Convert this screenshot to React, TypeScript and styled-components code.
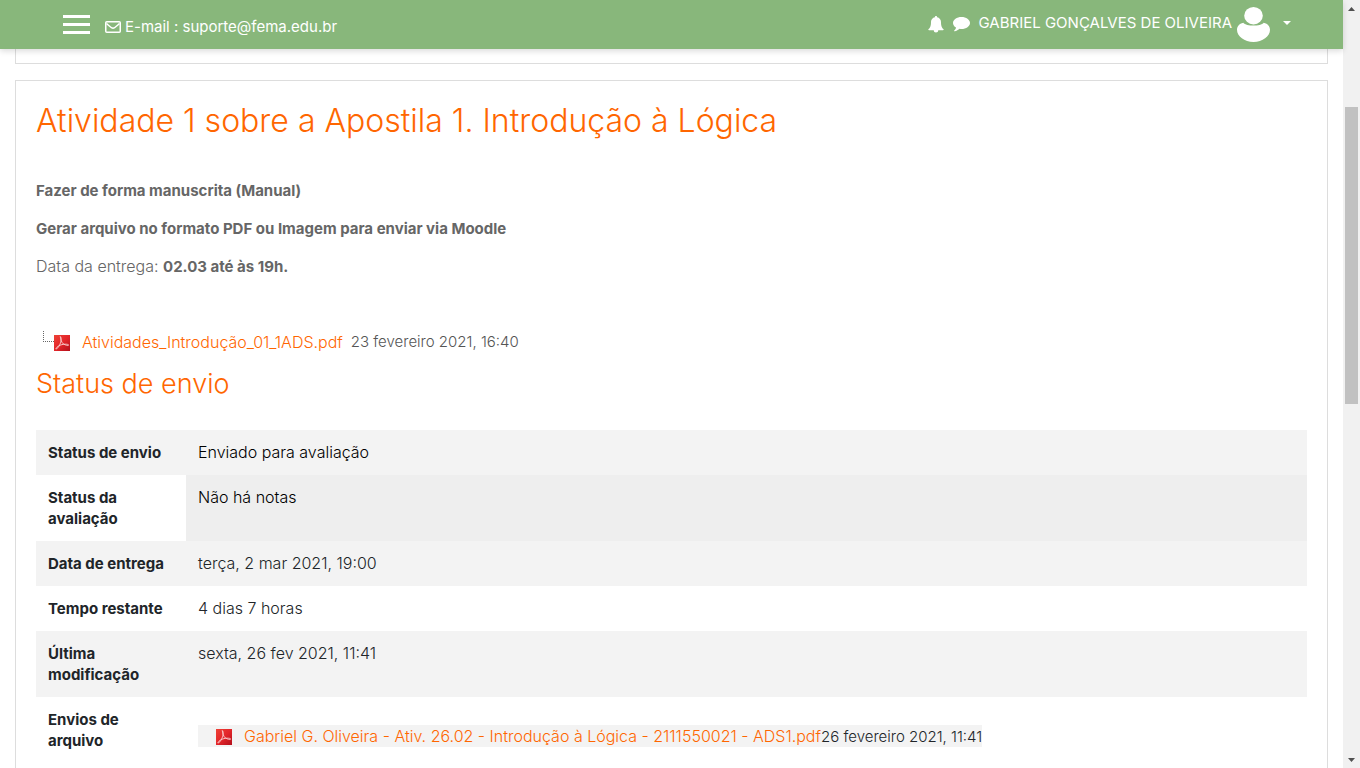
import React, { useId } from "react";
import styled, { createGlobalStyle } from "styled-components";

const GlobalStyle = createGlobalStyle`
  *, *::before, *::after { box-sizing: border-box; }
  body {
    margin: 0;
    background: #fff;
    color: #212529;
    font-family: "Century Gothic", Inter, "Open Sans", sans-serif;
    font-size: 16px;
    font-weight: 300;
    line-height: 22px;
  }
  h2, h3, p { margin: 0; }
`;

const Shell = styled.div`
  display: grid;
  grid-template-columns: minmax(0, 1fr) 17px;
  height: 100vh;
  overflow: hidden;
`;

const Page = styled.div`
  display: flex;
  flex-direction: column;
  min-height: 0;
`;

const TopBar = styled.header`
  z-index: 1;
  display: flex;
  flex: none;
  align-items: center;
  justify-content: space-between;
  height: 49px;
  padding: 0 52px 0 63px;
  background: #88b77b;
  box-shadow: 0 2px 6px rgba(0, 0, 0, 0.15);
  color: #fff;
  font-size: 15px;
  font-weight: 400;
`;

const BarGroup = styled.div<{ $gap: number }>`
  display: flex;
  align-items: center;
  gap: ${(p) => p.$gap}px;
`;

const BarButton = styled.button`
  display: flex;
  align-items: center;
  padding: 0;
  border: 0;
  background: none;
  color: inherit;
  font: inherit;
  cursor: pointer;
`;

const MailLink = styled.a`
  display: flex;
  align-items: center;
  gap: 4px;
  padding-top: 4px;
  color: inherit;
  text-decoration: none;
`;

const UserButton = styled(BarButton)`
  gap: 5px;
`;

const UserName = styled.span`
  padding-bottom: 3px;
`;

const Caret = styled.span`
  margin: 0 0 4px 8px;
  border: 4px solid transparent;
  border-top-color: #fff;
  border-bottom: 0;
`;

const Content = styled.main`
  display: flex;
  flex: 1;
  flex-direction: column;
  gap: 16px;
  min-height: 0;
  padding: 0 15px;
  overflow: hidden;
`;

const Card = styled.section`
  flex: none;
  padding: 20px;
  border: 1px solid #ddd;
`;

const PreviousCard = styled(Card)`
  padding: 14px 0 0;
  border-top: 0;
`;

const Title = styled.h2`
  margin-bottom: 38px;
  color: #ff6600;
  font-size: 32px;
  font-weight: 300;
  line-height: 40px;
`;

const Subtitle = styled.h3`
  margin: 15px 0 30px;
  color: #ff6600;
  font-size: 27px;
  font-weight: 300;
  line-height: 32px;
`;

const Intro = styled.div`
  display: grid;
  gap: 16px;
  margin-bottom: 54px;
  color: #666;
`;

const Strong = styled.strong`
  font-size: 15px;
  font-weight: 700;
  line-height: 20px;
`;

const FileRow = styled.div`
  display: flex;
  align-items: center;
  padding-left: 7px;
  color: #555;
`;

const Branch = styled.span`
  align-self: flex-start;
  width: 11px;
  height: 11px;
  border-bottom: 1px dotted #666;
  border-left: 1px dotted #666;
`;

const FileLink = styled.a`
  color: #ff6600;
  text-decoration: none;
`;

const FileDate = styled.span<{ $gap?: number }>`
  margin-left: ${(p) => p.$gap ?? 0}px;
  font-size: 15px;
`;

const StatusTable = styled.table`
  width: 100%;
  border-collapse: collapse;
  table-layout: fixed;
  line-height: 21px;

  tr:nth-child(odd) { background: #f3f3f3; }
`;

const Label = styled.th`
  width: 150px;
  padding: 12px;
  font-size: 15px;
  font-weight: 700;
  text-align: left;
  vertical-align: top;
`;

const Value = styled.td<{ $shaded?: boolean; $dark?: boolean }>`
  padding: 12px;
  background: ${(p) => (p.$shaded ? "#eee" : "transparent")};
  color: ${(p) => (p.$dark ? "#000" : "inherit")};
  vertical-align: top;
`;

const Submission = styled.div`
  display: inline-flex;
  align-items: center;
  height: 22px;
  margin-top: 16px;
  padding-left: 18px;
  background: #f3f3f3;
`;

const PdfSvg = styled.svg`
  flex: none;
  margin: 2px 12px 0 0;
`;

const ScrollBar = styled.aside`
  display: flex;
  flex-direction: column;
  align-items: center;
  background: #f1f1f1;
`;

const ScrollButton = styled(BarButton)`
  justify-content: center;
  width: 17px;
  height: 17px;
`;

const Track = styled.div`
  display: grid;
  flex: 1;
  grid-template-rows: 90fr 297fr 347fr;
  width: 13px;
`;

const Thumb = styled.div`
  grid-row: 2;
  background: #c1c1c1;
`;

function PdfIcon() {
  const gradient = useId();
  return (
    <PdfSvg width="16" height="16" viewBox="0 0 16 16" aria-hidden="true">
      <defs>
        <linearGradient id={gradient} x1="0" y1="0" x2="1" y2="1">
          <stop offset="0" stopColor="#ee4136" />
          <stop offset="0.5" stopColor="#e3262a" />
          <stop offset="1" stopColor="#b30f1b" />
        </linearGradient>
      </defs>
      <rect width="16" height="16" fill={`url(#${gradient})`} />
      <path
        d="M6.300 1.500C6.600 4.500 7.500 7.500 9.500 9c1.700 1 4.600 2 5.100 1.200.3-1-3.200-1.400-6.600-.6-2.500.6-5.200 2-6.200 4.300 1.800.2 3.700-3.300 4.700-6 .8-2.300 1-5.500-.2-6.400z"
        fill="none"
        stroke="#f8cfcf"
        strokeWidth="0.9"
      />
    </PdfSvg>
  );
}

const rows: { label: string; value: string; shaded?: boolean; dark?: boolean }[] = [
  { label: "Status de envio", value: "Enviado para avaliação", dark: true },
  { label: "Status da avaliação", value: "Não há notas", shaded: true, dark: true },
  { label: "Data de entrega", value: "terça, 2 mar 2021, 19:00" },
  { label: "Tempo restante", value: "4 dias 7 horas" },
  { label: "Última modificação", value: "sexta, 26 fev 2021, 11:41" },
];

export default function App() {
  return (
    <Shell>
      <GlobalStyle />
      <Page>
        <TopBar>
          <BarGroup $gap={15}>
            <BarButton type="button" aria-label="Menu">
              <svg width="27" height="19" viewBox="0 0 27 19" fill="#fff">
                <path d="M0 0h27v3H0zM0 8h27v3H0zM0 16h27v3H0z" />
              </svg>
            </BarButton>
            <MailLink href="mailto:suporte@fema.edu.br">
              <svg width="16" height="12" viewBox="0 0 16 12" fill="none" stroke="#fff" strokeWidth="1.500">
                <rect x=".75" y=".75" width="14.500" height="10.500" rx="1" />
                <path d="M1.500 2.500C3 4 5 5.500 6.500 6.700q1.500 1.200 3 0C11 5.500 13 4 14.500 2.500" />
              </svg>
              E-mail : suporte@fema.edu.br
            </MailLink>
          </BarGroup>
          <BarGroup $gap={9}>
            <BarButton type="button" aria-label="Notificações">
              <svg width="16" height="17" viewBox="0 0 16 17" fill="#fff">
                <path d="M8 0c.7 0 1.100.5 1.100 1.200C11.500 1.700 13 3.500 13 6c0 4.300 1 6 2.600 7.300.3.400 0 .9-.6.9h-4.700a2.300 2.300 0 0 1-4.600 0H1c-.6 0-.9-.5-.6-.9C2 12 3 10.300 3 6c0-2.500 1.500-4.300 3.900-4.800C6.900.5 7.300 0 8 0z" />
              </svg>
            </BarButton>
            <BarButton type="button" aria-label="Mensagens">
              <svg width="17" height="15" viewBox="0 0 17 15" fill="#fff">
                <path d="M8.500 0C13.200 0 17 2.700 17 6s-3.800 6-8.500 6c-.7 0-1.300 0-1.900-.2-1.300 1.200-3 2.200-5 2.500-.5 0-.7-.4-.3-.8.9-.8 1.500-1.600 1.700-2.900C1.200 9.500 0 7.900 0 6c0-3.300 3.800-6 8.500-6z" />
              </svg>
            </BarButton>
            <UserButton type="button">
              <UserName>GABRIEL GONÇALVES DE OLIVEIRA</UserName>
              <svg width="33" height="35" viewBox="0 0 33 35" fill="#fff">
                <ellipse cx="16.500" cy="8.700" rx="9.300" ry="8.700" />
                <path d="M6.300 15.700c3 3.800 17.400 3.800 20.400 0C31 16.600 33 19.500 33 22.800 33 29.500 25.500 35 16.500 35S0 29.500 0 22.800c0-3.300 2-6.200 6.300-7.100z" />
              </svg>
              <Caret />
            </UserButton>
          </BarGroup>
        </TopBar>
        <Content>
          <PreviousCard aria-hidden="true" />
          <Card>
            <Title>Atividade 1 sobre a Apostila 1. Introdução à Lógica</Title>
            <Intro>
              <p><Strong>Fazer de forma manuscrita (Manual)</Strong></p>
              <p><Strong>Gerar arquivo no formato PDF ou Imagem para enviar via Moodle</Strong></p>
              <p>Data da entrega: <Strong>02.03 até às 19h.</Strong></p>
            </Intro>
            <FileRow>
              <Branch />
              <PdfIcon />
              <FileLink href="#atividades">Atividades_Introdução_01_1ADS.pdf</FileLink>
              <FileDate $gap={8}>23 fevereiro 2021, 16:40</FileDate>
            </FileRow>
            <Subtitle>Status de envio</Subtitle>
            <StatusTable>
              <tbody>
                {rows.map((row) => (
                  <tr key={row.label}>
                    <Label scope="row">{row.label}</Label>
                    <Value $shaded={row.shaded} $dark={row.dark}>{row.value}</Value>
                  </tr>
                ))}
                <tr>
                  <Label scope="row">Envios de arquivo</Label>
                  <Value>
                    <Submission>
                      <PdfIcon />
                      <FileLink href="#envio">
                        Gabriel G. Oliveira - Ativ. 26.02 - Introdução à Lógica - 2111550021 - ADS1.pdf
                      </FileLink>
                      <FileDate>26 fevereiro 2021, 11:41</FileDate>
                    </Submission>
                  </Value>
                </tr>
              </tbody>
            </StatusTable>
          </Card>
        </Content>
      </Page>
      <ScrollBar aria-label="Rolagem">
        <ScrollButton type="button" aria-label="Rolar para cima">
          <svg width="7" height="4" viewBox="0 0 7 4" fill="#505050"><path d="M0 4L3.500 0 7 4z" /></svg>
        </ScrollButton>
        <Track><Thumb /></Track>
        <ScrollButton type="button" aria-label="Rolar para baixo">
          <svg width="7" height="4" viewBox="0 0 7 4" fill="#505050"><path d="M0 0h7L3.500 4z" /></svg>
        </ScrollButton>
      </ScrollBar>
    </Shell>
  );
}
